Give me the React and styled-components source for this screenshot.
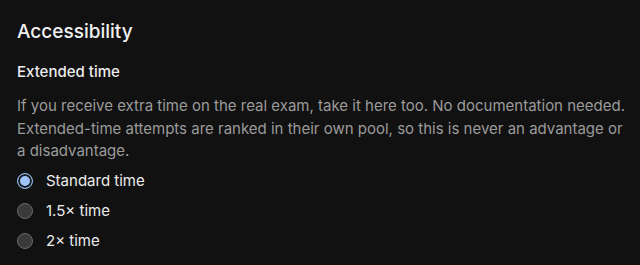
import React, { useState } from "react";
import styled, { createGlobalStyle } from "styled-components";

const Global = createGlobalStyle`
  html, body { margin: 0; padding: 0; background: #111111; }
  body { font-family: Inter, "Noto Sans", sans-serif; color: #ececec; }
`;

const Section = styled.section`
  padding: 19px 12px 0 17px;
  display: flex;
  flex-direction: column;
`;

const Title = styled.h2`
  margin: 0;
  font-size: 19px;
  font-weight: 500;
  line-height: 26px;
  color: #f0f0f0;
`;

const Subtitle = styled.h3`
  margin: 16px 0 0 0;
  font-size: 15px;
  font-weight: 500;
  line-height: 22px;
  color: #ececec;
`;

const Desc = styled.p`
  margin: 12px 0 0 0;
  font-size: 15px;
  line-height: 22.5px;
  color: #9b9b9b;
`;

const Options = styled.div`
  display: flex;
  flex-direction: column;
  gap: 6px;
  margin-top: 6px;
`;

const Option = styled.label`
  display: flex;
  align-items: center;
  gap: 13px;
  height: 24px;
  font-size: 15px;
  color: #ececec;
  cursor: pointer;
`;

const Dot = styled.span`
  box-sizing: border-box;
  width: 16px;
  height: 16px;
  border-radius: 50%;
  flex-shrink: 0;
  border: 1px solid ${(p) => (p.$on ? "#8ab8ef" : "#6a6a6a")};
  background: ${(p) => (p.$on ? "#9cc6fb" : "#3a3a3a")};
  box-shadow: ${(p) => (p.$on ? "inset 0 0 0 2px #1a1a1a" : "none")};
`;

const options = ["Standard time", "1.5× time", "2× time"];

export default function App() {
  const [sel, setSel] = useState(0);
  return (
    <>
      <Global />
      <Section>
        <Title>Accessibility</Title>
        <Subtitle>Extended time</Subtitle>
        <Desc>
          If you receive extra time on the real exam, take it here too. No documentation needed.
          Extended-time attempts are ranked in their own pool, so this is never an advantage or
          a disadvantage.
        </Desc>
        <Options>
          {options.map((o, i) => (
            <Option key={o} onClick={() => setSel(i)}>
              <Dot $on={sel === i} />
              {o}
            </Option>
          ))}
        </Options>
      </Section>
    </>
  );
}
